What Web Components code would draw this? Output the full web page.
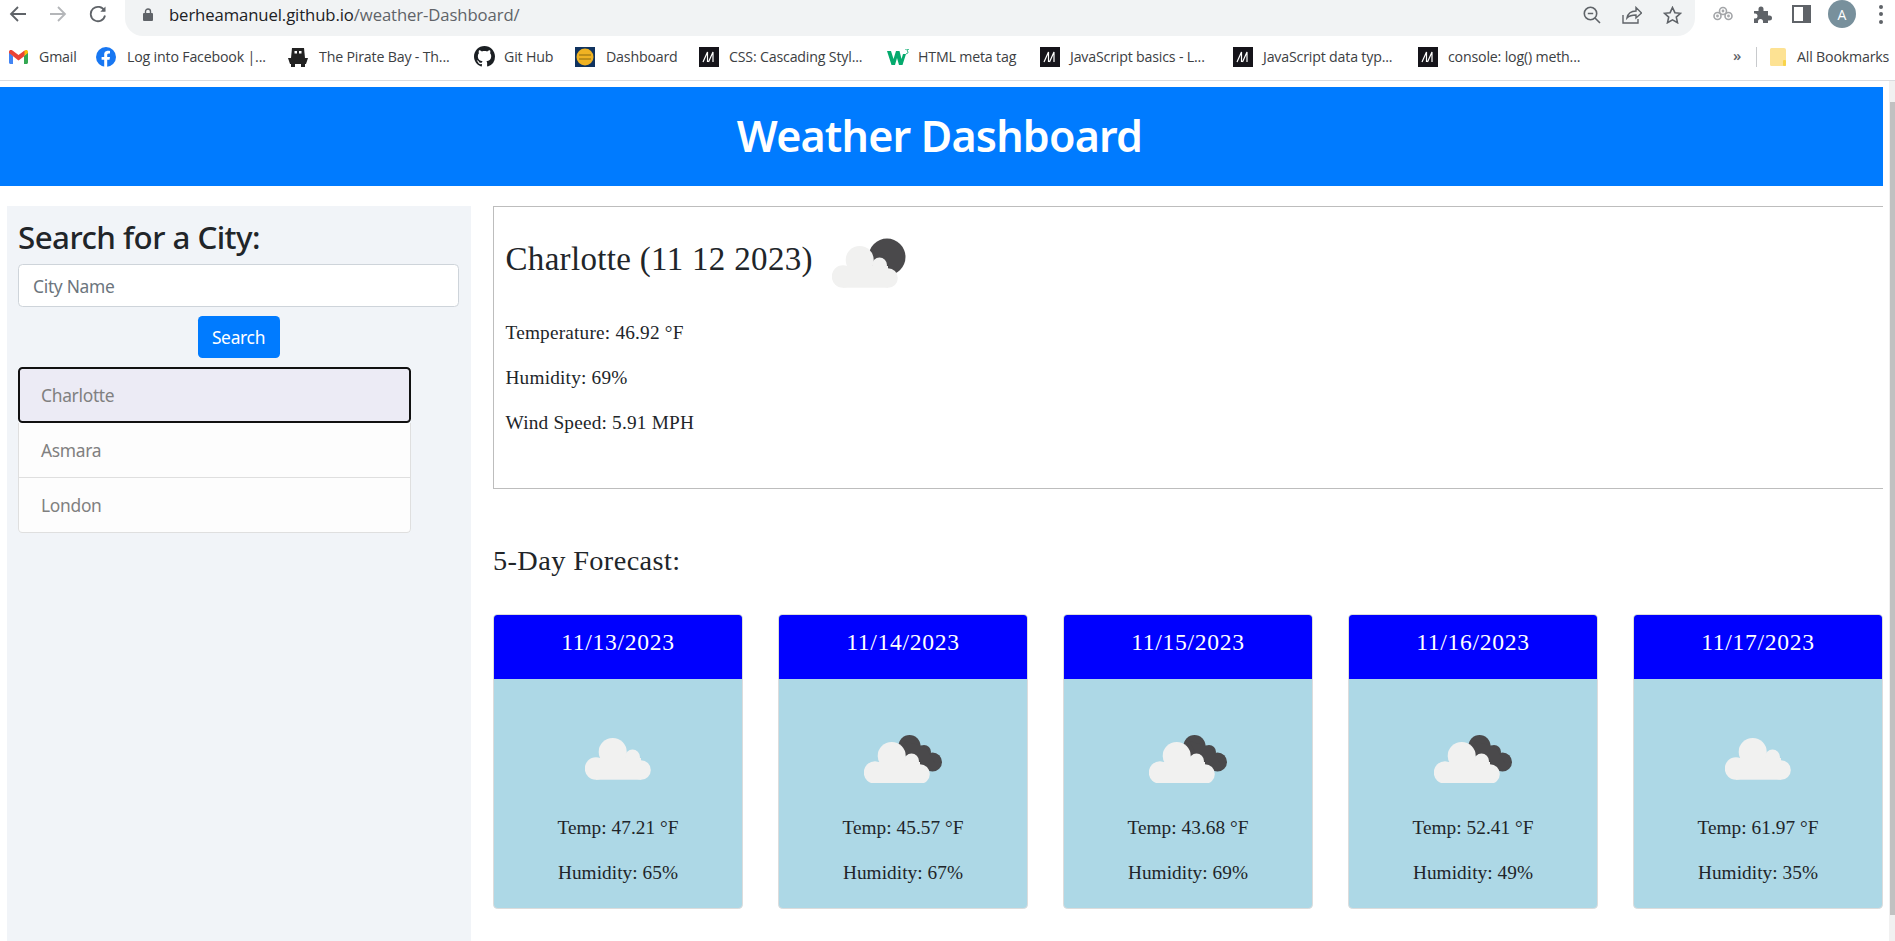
<!DOCTYPE html>
<html lang="en">
<head>
<meta charset="utf-8">
<title>Weather Dashboard</title>
<style>
  html, body { margin: 0; padding: 0; height: 941px; overflow: hidden; background: #fff; }
</style>
</head>
<body>
<browser-chrome></browser-chrome>
<page-frame>
  <app-header>Weather Dashboard</app-header>
  <dashboard-layout>
    <search-panel slot="side"></search-panel>
    <current-weather slot="main" city="Charlotte (11 12 2023)" temp="46.92" humidity="69" wind="5.91"></current-weather>
    <forecast-row slot="main">
      <forecast-card date="11/13/2023" temp="47.21" humidity="65" icon="cloud"></forecast-card>
      <forecast-card date="11/14/2023" temp="45.57" humidity="67" icon="broken"></forecast-card>
      <forecast-card date="11/15/2023" temp="43.68" humidity="69" icon="broken"></forecast-card>
      <forecast-card date="11/16/2023" temp="52.41" humidity="49" icon="broken"></forecast-card>
      <forecast-card date="11/17/2023" temp="61.97" humidity="35" icon="cloud"></forecast-card>
    </forecast-row>
  </dashboard-layout>
</page-frame>

<script>
// Shared cloud shape, drawn in a 66x42 box
const CLOUD = `
  <circle cx="27.7" cy="14" r="14"/>
  <circle cx="47.5" cy="19" r="7.5"/>
  <circle cx="11" cy="30.5" r="11.2"/>
  <circle cx="56" cy="32" r="9.8"/>
  <rect x="11" y="20" width="45" height="21.7"/>`;

const ICONS = {
  cloud: { w: 66, h: 42, svg: `<g fill="#f1f1f0">${CLOUD}</g>` },
  broken: { w: 78, h: 48, svg: `
    <g fill="#4a494b">
      <circle cx="45.5" cy="11" r="11"/>
      <circle cx="60" cy="17" r="7"/>
      <circle cx="68.5" cy="27" r="9.5"/>
      <path d="M40 6 L62 12 L74 34 L58 37 Z"/>
    </g>
    <g transform="translate(0 7)" fill="#f1f1f0">${CLOUD}</g>` },
  moon: { w: 76, h: 52, svg: `
    <circle cx="55" cy="20" r="18.5" fill="#4a494b"/>
    <g transform="translate(0 9)" fill="#f1f1f0">${CLOUD}</g>` }
};

class WeatherIcon extends HTMLElement {
  connectedCallback() {
    const icon = ICONS[this.getAttribute('type')] || ICONS.cloud;
    this.attachShadow({ mode: 'open' }).innerHTML = `
      <style>:host { display: block; width: ${icon.w}px; height: ${icon.h}px; } svg { display: block; }</style>
      <svg width="${icon.w}" height="${icon.h}" viewBox="0 0 ${icon.w} ${icon.h}">${icon.svg}</svg>`;
  }
}

class BookmarkItem extends HTMLElement {
  connectedCallback() {
    const root = this.attachShadow({ mode: 'open' });
    root.innerHTML = `
      <style>
        :host { display: flex; flex: none; align-items: center; gap: var(--gap, 11px); height: 20px; width: ${this.getAttribute('width')}px;
          color: #3c4043; font: 14.2px "Open Sans", sans-serif; white-space: nowrap; letter-spacing: -.18px; }
        ::slotted(svg) { display: block; flex: none; }
      </style>
      <slot name="icon"></slot><span>${this.getAttribute('label')}</span>`;
  }
}

const MDN = `<svg slot="icon" width="20" height="20" viewBox="0 0 20 20"><rect width="20" height="20" fill="#15141a"/><path d="M4 15 L8.500 5 L8.500 15 M9.500 15 L14 5 L14 15" stroke="#fff" stroke-width="1.200" fill="none"/></svg>`;

class BrowserChrome extends HTMLElement {
  connectedCallback() {
    const root = this.attachShadow({ mode: 'open' });
    root.innerHTML = `
      <style>
        :host { display: block; height: 81px; margin-bottom: 6px; background: #fff; font-family: "Open Sans", sans-serif; }
        .toolbar { display: flex; align-items: center; height: 36px; }
        .nav { display: flex; align-items: center; gap: 22px; width: 125px; padding: 0 0 8px 9px; box-sizing: border-box; height: 36px; }
        .omnibox { width: 1570px; height: 36px; background: #f1f3f4; border-radius: 0 0 18px 18px;
          display: flex; align-items: center; padding: 0 13px 7px 18px; box-sizing: border-box; }
        .url { font-size: 16.700px; letter-spacing: -.1px; color: #202124; margin-left: 16px; flex: 1; white-space: nowrap; }
        .url span { color: #5f6368; }
        .actions { display: flex; gap: 21px; align-items: center; }
        .ext { display: flex; align-items: center; gap: 20px; padding: 0 0 8px 18px; }
        .avatar { width: 28px; height: 28px; border-radius: 50%; background: #78909c; color: #fff; font-size: 14px; display: grid; place-items: center; margin: 0 0 -8px -3px; position: relative; top: -4px; }
        .kebab { display: flex; flex-direction: column; gap: 3.5px; margin-left: 3px; }
        .kebab i { width: 4px; height: 4px; border-radius: 50%; background: #5f6368; display: block; }
        .bookmarks { display: flex; align-items: center; height: 45px; padding: 0 0 3px 9px; box-sizing: border-box; border-bottom: 1.5px solid #dadce0; }
        .more { width: 23px; color: #5f6368; font-size: 15px; font-weight: 600; flex: none; margin-top: -4px; }
        .sep { width: 1px; height: 20px; background: #c8cacd; margin-right: 13px; flex: none; }
      </style>
      <div class="toolbar">
        <div class="nav">
          <svg width="18" height="18" viewBox="0 0 18 18" fill="none" stroke="#5f6368" stroke-width="1.8"><path d="M17 9H2M9 2 2 9l7 7"/></svg>
          <svg width="18" height="18" viewBox="0 0 18 18" fill="none" stroke="#b4b6b9" stroke-width="1.8"><path d="M1 9h15M9 2l7 7-7 7"/></svg>
          <svg width="18" height="18" viewBox="0 0 18 18" fill="none" stroke="#5f6368" stroke-width="1.8"><path d="M15.5 6A7.2 7.2 0 1 0 16 10.5"/><path d="M16.5 1.5v5.2h-5.2" stroke-width="0" fill="#5f6368"/></svg>
        </div>
        <div class="omnibox">
          <svg width="10" height="13" viewBox="0 0 10 13"><rect y="5" width="10" height="8" rx="1" fill="#5f6368"/><path d="M2.5 6V3.5a2.5 2.5 0 0 1 5 0V6" fill="none" stroke="#5f6368" stroke-width="1.4"/></svg>
          <div class="url">berheamanuel.github.io<span>/weather-Dashboard/</span></div>
          <div class="actions">
            <svg width="18" height="18" viewBox="0 0 18 18" fill="none" stroke="#5f6368" stroke-width="1.6"><circle cx="7.5" cy="7.5" r="6.2"/><path d="M4.8 7.5h5.4M12 12l5 5"/></svg>
            <svg width="20" height="18" viewBox="0 0 20 18" fill="none" stroke="#5f6368" stroke-width="1.4"><path d="M1 9v8h15v-4M5 12c1-5 5-7 9-7V1.5L19.5 7 14 12V9c-4 0-7 1-9 3z"/></svg>
            <svg width="19" height="18" viewBox="0 0 19 18" fill="none" stroke="#5f6368" stroke-width="1.6"><path d="M9.5 1.5l2.4 5.2 5.6.6-4.2 3.8 1.2 5.6-5-2.9-5 2.9 1.2-5.6L1.5 7.3l5.6-.6z"/></svg>
          </div>
        </div>
        <div class="ext">
          <svg width="20" height="16" viewBox="0 0 20 16" fill="none" stroke="#a3a5a8" stroke-width="1.600"><circle cx="10" cy="5" r="3.500"/><circle cx="4.500" cy="10" r="3.500"/><circle cx="15.500" cy="10" r="3.500"/><circle cx="10" cy="5" r=".6"/><circle cx="4.500" cy="10" r=".6"/><circle cx="15.500" cy="10" r=".6"/></svg>
          <svg width="19" height="19" viewBox="0 0 19 19" fill="#5f6368"><path d="M1 6h4.5V4a2.5 2.5 0 0 1 5 0v2H15v4.500h1.500a2.500 2.500 0 0 1 0 5H15V18H10v-1.500a2.500 2.500 0 0 0-5 0V18H1v-4.500h1a2.500 2.500 0 0 0 0-5H1z"/></svg>
          <svg width="19" height="18" viewBox="0 0 19 18"><rect x="1" y="1" width="17" height="16" fill="none" stroke="#5f6368" stroke-width="2"/><rect x="11" y="1" width="7" height="16" fill="#5f6368"/></svg>
          <div class="avatar">A</div>
          <div class="kebab"><i></i><i></i><i></i></div>
        </div>
      </div>
      <div class="bookmarks">
        <bookmark-item width="87" label="Gmail">
          <svg slot="icon" width="19" height="14" viewBox="0 0 19 14"><path d="M0 2v10.500C0 13.300.7 14 1.500 14H4V6z" fill="#4285f4"/><path d="M19 2v10.500c0 .8-.7 1.500-1.500 1.500H15V6z" fill="#34a853"/><path d="M15 1v5l4-3V2c0-2-2-2.500-3-1.500z" fill="#fbbc04"/><path d="M0 2c0-2 2-2.500 3.500-1.500L9.500 5l6-4.500V6l-6 4.500L0 3z" fill="#ea4335"/></svg>
        </bookmark-item>
        <bookmark-item width="192" label="Log into Facebook |...">
          <svg slot="icon" width="20" height="20" viewBox="0 0 20 20"><circle cx="10" cy="10" r="10" fill="#1877f2"/><path d="M13.500 12.800l.5-2.900h-2.800V8c0-.8.4-1.600 1.600-1.600H14V4c-2-.4-5.800-.7-5.800 3.600v2.300H5.600v2.900h2.600V20h3V12.800z" fill="#fff"/></svg>
        </bookmark-item>
        <bookmark-item width="186" label="The Pirate Bay - Th...">
          <svg slot="icon" width="20" height="20" viewBox="0 0 20 20" fill="#222"><path d="M4 1h12l1 10H3z"/><path d="M0 11h20l-2 6H2z"/><path d="M3 17h4v3H3zM13 17h4v3h-4z"/><rect x="6.500" y="4" width="2.500" height="2.500" fill="#fff"/><rect x="11" y="4" width="2.500" height="2.500" fill="#fff"/></svg>
        </bookmark-item>
        <bookmark-item width="101" label="Git Hub" style="--gap:9px">
          <svg slot="icon" width="21" height="21" viewBox="0 0 16 16" fill="#1b1f23"><path d="M8 0C3.58 0 0 3.58 0 8c0 3.54 2.29 6.53 5.47 7.59.4.07.55-.17.55-.38 0-.19-.01-.82-.01-1.49-2.01.37-2.53-.49-2.69-.94-.09-.23-.48-.94-.82-1.13-.28-.15-.68-.52-.01-.53.63-.01 1.08.58 1.23.82.72 1.21 1.87.87 2.33.66.07-.52.28-.87.51-1.07-1.78-.2-3.64-.89-3.64-3.95 0-.87.31-1.59.82-2.15-.08-.2-.36-1.02.08-2.12 0 0 .67-.21 2.2.82.64-.18 1.32-.27 2-.27.68 0 1.36.09 2 .27 1.53-1.04 2.2-.82 2.2-.82.44 1.1.16 1.92.08 2.12.51.56.82 1.27.82 2.15 0 3.07-1.87 3.75-3.65 3.95.29.25.54.73.54 1.48 0 1.07-.01 1.93-.01 2.2 0 .21.15.46.55.38A8.013 8.013 0 0016 8c0-4.42-3.58-8-8-8z"/></svg>
        </bookmark-item>
        <bookmark-item width="124" label="Dashboard">
          <svg slot="icon" width="20" height="20" viewBox="0 0 20 20"><rect width="20" height="20" fill="#10335f"/><circle cx="10" cy="10" r="8.500" fill="#f0b323"/><path d="M4 8h12M4 12h12" stroke="#8a6a10" stroke-width="1"/></svg>
        </bookmark-item>
        ${this.mdn(188, 'CSS: Cascading Styl...')}
        <bookmark-item width="153" label="HTML meta tag" style="--gap:9px">
          <svg slot="icon" width="22" height="16" viewBox="0 0 22 16"><path d="M0 2h4l2.500 8L9 2h3.500l2 8 1.500-5h3l-3.500 11H12l-2-7-2 7H4.500z" fill="#04aa6d"/><path d="M18 0h3.500l-1.500 1.800c1.500.5 1.200 3-.8 3" fill="none" stroke="#04aa6d" stroke-width="1"/></svg>
        </bookmark-item>
        ${this.mdn(193, 'JavaScript basics - L...')}
        ${this.mdn(185, 'JavaScript data typ...')}
        ${this.mdn(315, 'console: log() meth...')}
        <div class="more">»</div>
        <div class="sep"></div>
        <bookmark-item width="125" label="All Bookmarks">
          <svg slot="icon" width="16" height="18" viewBox="0 0 16 18"><path d="M1.500 0H14a2 2 0 0 1 2 2v15a1 1 0 0 1-1 1H1.500A1.500 1.500 0 0 1 0 16.500v-15A1.500 1.500 0 0 1 1.500 0z" fill="#fde293"/><rect x="13" y="12" width="3" height="6" rx="1" fill="#f9d44a"/></svg>
        </bookmark-item>
      </div>`;
  }

  mdn(width, label) {
    return `<bookmark-item width="${width}" label="${label}" style="--gap:10px">${MDN}</bookmark-item>`;
  }
}

class PageFrame extends HTMLElement {
  connectedCallback() {
    this.attachShadow({ mode: 'open' }).innerHTML = `
      <style>
        :host { display: flex; height: 854px; }
        .page { width: 1883px; flex: none; }
        .bar { width: 6px; margin-left: 6px; flex: 1; background: #f1f1f1; margin-top: -6px; position: relative; }
        .bar::after { content: ""; position: absolute; left: 1px; right: 0; top: 21px; height: 813px; background: #c1c1c1; }
      </style>
      <div class="page"><slot></slot></div><div class="bar"></div>`;
  }
}

class AppHeader extends HTMLElement {
  connectedCallback() {
    this.attachShadow({ mode: 'open' }).innerHTML = `
      <style>
        :host { display: flex; height: 99px; align-items: center; justify-content: center; padding: 0 4px 2px 0; box-sizing: border-box;
          background: #007bff; color: #fff; font: 600 43px/1.2 "Noto Sans", sans-serif; letter-spacing: -.8px; }
      </style>
      <slot></slot>`;
  }
}

class DashboardLayout extends HTMLElement {
  connectedCallback() {
    this.attachShadow({ mode: 'open' }).innerHTML = `
      <style>
        :host { display: flex; height: 755px; gap: 22px; padding: 20px 0 0 7px; box-sizing: border-box; }
        .side { width: 464px; flex: none; }
        .main { flex: 1; min-width: 0; }
      </style>
      <div class="side"><slot name="side"></slot></div>
      <div class="main"><slot name="main"></slot></div>`;
  }
}

class SearchPanel extends HTMLElement {
  connectedCallback() {
    this.attachShadow({ mode: 'open' }).innerHTML = `
      <style>
        :host { display: block; height: 735px; padding: 11px 12px 0 11px; box-sizing: border-box; background: #f1f4f8; color: #212529; font-family: "Noto Sans", sans-serif; }
        h2 { margin: 0 0 7px; font: 500 31.300px/40px "Noto Sans", sans-serif; letter-spacing: -.55px; }
        input { display: block; width: 100%; height: 43px; box-sizing: border-box; padding: 0 14px; border: 1px solid #ced4da; border-radius: 4.5px;
          background: #fff; font: 17.400px "Noto Sans", sans-serif; letter-spacing: -.3px; outline: none; }
        input::placeholder { color: #6c757d; opacity: 1; }
        .action { display: flex; justify-content: center; margin: 9px 0; }
        button { width: 82px; height: 42px; border: 0; border-radius: 4.5px; background: #007bff; color: #fff; font: 17.400px "Noto Sans", sans-serif; letter-spacing: -.3px; padding: 0; }
        ul { list-style: none; margin: 0; padding: 0; width: 393px; font-size: 17.400px; letter-spacing: -.3px; color: #808080; }
        li { height: 55px; box-sizing: border-box; display: flex; align-items: center; padding: 0 22px; background: #fdfdfd; border: 1px solid #dfdfdf; border-top: 0; }
        li:last-child { border-radius: 0 0 4.5px 4.5px; }
        li.active { height: 56px; background: #ecebf5; border: 2px solid #111; border-radius: 4.5px; padding: 0 21px; }
      </style>
      <h2>Search for a City:</h2>
      <input type="text" placeholder="City Name">
      <div class="action"><button type="button">Search</button></div>
      <ul>
        <li class="active">Charlotte</li>
        <li>Asmara</li>
        <li>London</li>
      </ul>`;
  }
}

class CurrentWeather extends HTMLElement {
  connectedCallback() {
    this.attachShadow({ mode: 'open' }).innerHTML = `
      <style>
        :host { display: block; height: 283px; box-sizing: border-box; border: 1.500px solid #bdbdbd; border-right: 0; padding: 0 0 0 11.500px;
          color: #212529; font: 19.300px/27px "Liberation Serif", serif; letter-spacing: .2px; }
        .title { display: flex; align-items: flex-start; height: 112px; }
        h2 { margin: 32px 0 0; font: 400 33px/40px "Liberation Serif", serif; letter-spacing: .32px; }
        weather-icon { margin: 30px 0 0 19px; }
        p { margin: 0 0 18px; }
      </style>
      <div class="title"><h2>${this.getAttribute('city')}</h2><weather-icon type="moon"></weather-icon></div>
      <p>Temperature: ${this.getAttribute('temp')} °F</p>
      <p>Humidity: ${this.getAttribute('humidity')}%</p>
      <p>Wind Speed: ${this.getAttribute('wind')} MPH</p>`;
  }
}

class ForecastRow extends HTMLElement {
  connectedCallback() {
    this.attachShadow({ mode: 'open' }).innerHTML = `
      <style>
        :host { display: block; }
        h3 { margin: 56px 0 37px; font: 400 28.300px/32px "Liberation Serif", serif; color: #212529; letter-spacing: .4px; }
        .cards { display: flex; justify-content: space-between; }
      </style>
      <h3>5-Day Forecast:</h3>
      <div class="cards"><slot></slot></div>`;
  }
}

class ForecastCard extends HTMLElement {
  connectedCallback() {
    this.attachShadow({ mode: 'open' }).innerHTML = `
      <style>
        :host { display: block; width: 250px; height: 295px; box-sizing: border-box; border: 1px solid #dcdcdc; border-radius: 4.500px; overflow: hidden;
          background: #add8e6; color: #212529; text-align: center; font: 19.300px/27px "Liberation Serif", serif; letter-spacing: .05px; }
        .head { height: 65px; margin: -1px -1px 0; padding-top: 15px; box-sizing: border-box; background: #00f; color: #fff; font-size: 23.600px; letter-spacing: .7px; }
        .art { height: 135px; padding-top: 25px; box-sizing: border-box; display: flex; align-items: center; justify-content: center; }
        p { margin: 0 0 18px; }
      </style>
      <div class="head">${this.getAttribute('date')}</div>
      <div class="art"><weather-icon type="${this.getAttribute('icon')}"></weather-icon></div>
      <p>Temp: ${this.getAttribute('temp')} °F</p>
      <p>Humidity: ${this.getAttribute('humidity')}%</p>`;
  }
}

customElements.define('weather-icon', WeatherIcon);
customElements.define('bookmark-item', BookmarkItem);
customElements.define('browser-chrome', BrowserChrome);
customElements.define('page-frame', PageFrame);
customElements.define('app-header', AppHeader);
customElements.define('dashboard-layout', DashboardLayout);
customElements.define('search-panel', SearchPanel);
customElements.define('current-weather', CurrentWeather);
customElements.define('forecast-row', ForecastRow);
customElements.define('forecast-card', ForecastCard);
</script>
</body>
</html>
